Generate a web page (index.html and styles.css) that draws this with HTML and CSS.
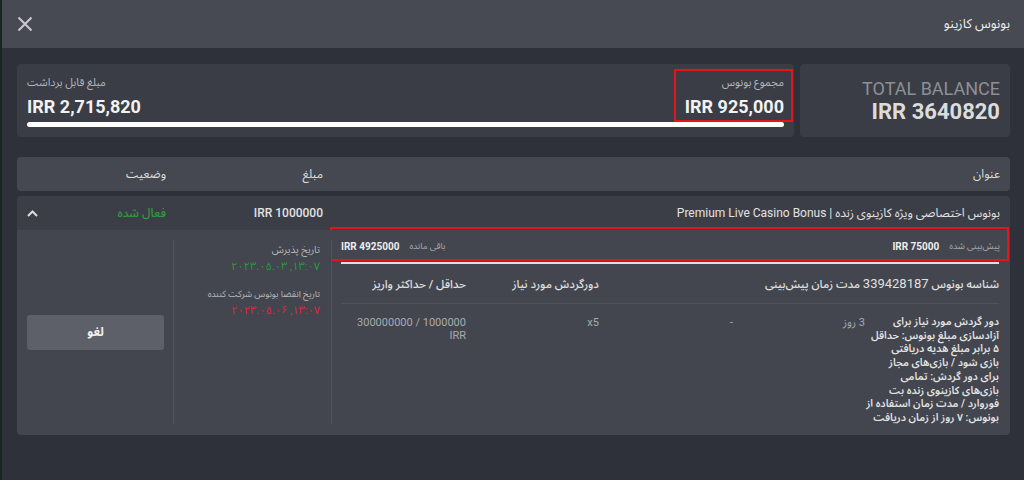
FILE: index.html
```html
<!DOCTYPE html>
<html>
<head>
  <meta charset="utf-8">
  <meta name="viewport" content="width=device-width">
  <title>بونوس کازینو</title>
  <link rel="stylesheet" href="styles.css">
</head>
<body>

    <div class="modal">
        <div class="modal_head">
            <svg class="close" width="16" height="16" viewBox="0 0 16 16">
                <path d="M1.5 1.5L14.5 14.5M14.5 1.5L1.5 14.5" stroke="#c9cacd" stroke-width="2" fill="none"/>
            </svg>
            <div class="modal_title" dir="rtl">بونوس کازینو</div>
        </div>

        <div class="modal_body">
            <div class="balances">
                <div class="card wallet">
                    <div class="amounts">
                        <div class="amount withdraw">
                            <div class="amount_label" dir="rtl">مبلغ قابل برداشت</div>
                            <div class="amount_value">IRR 2,715,820</div>
                        </div>
                        <div class="amount bonus marked">
                            <div class="amount_label" dir="rtl">مجموع بونوس</div>
                            <div class="amount_value">IRR 925,000</div>
                        </div>
                    </div>
                    <div class="progress"></div>
                </div>
                <div class="card total">
                    <div class="total_label">TOTAL BALANCE</div>
                    <div class="total_value">IRR 3640820</div>
                </div>
            </div>

            <div class="table_head" dir="rtl">
                <div class="th">عنوان</div>
                <div class="th">مبلغ</div>
                <div class="th">وضعیت</div>
            </div>

            <div class="bonus_row" dir="rtl">
                <!-- top line -->
                <div class="cell top title">بونوس اختصاصی ویژه کازینوی زنده | Premium Live Casino Bonus</div>
                <div class="cell top money">IRR 1000000</div>
                <div class="cell top state">
                    <span class="active">فعال شده</span>
                    <svg width="11" height="7" viewBox="0 0 11 7">
                        <polyline points="1,6 5.5,1.5 10,6" stroke="#dcdcdc" stroke-width="2" fill="none"/>
                    </svg>
                </div>

                <!-- details -->
                <div class="cell bottom details">
                    <div class="wager">
                        <div class="wager_part">
                            <span class="wager_label">پیش‌بینی شده</span>
                            <span class="wager_value" dir="ltr">IRR 75000</span>
                        </div>
                        <div class="wager_part">
                            <span class="wager_label">باقی مانده</span>
                            <span class="wager_value" dir="ltr">IRR 4925000</span>
                        </div>
                    </div>
                    <div class="wager_bar"></div>

                    <div class="info_grid info_head">
                        <div class="ih">شناسه بونوس <span class="bonus_id">339428187</span></div>
                        <div class="ih shift">مدت زمان پیش‌بینی</div>
                        <div class="ih"></div>
                        <div class="ih">دورگردش مورد نیاز</div>
                        <div class="ih">حداقل / حداکثر واریز</div>
                    </div>
                    <div class="info_grid info_body">
                        <div class="desc">دور گردش مورد نیاز برای<br>آزادسازی مبلغ بونوس: حداقل<br>۵ برابر مبلغ هدیه دریافتی<br>بازی شود / بازی‌های مجاز<br>برای دور گردش: تمامی<br>بازی‌های کازینوی زنده بت<br>فوروارد / مدت زمان استفاده از<br>بونوس: ۷ روز از زمان دریافت</div>
                        <div class="iv">3 روز</div>
                        <div class="iv">-</div>
                        <div class="iv"><span dir="ltr">x5</span></div>
                        <div class="iv"><span dir="ltr">300000000 / 1000000</span><br>IRR</div>
                    </div>
                </div>
                <div class="cell bottom dates">
                    <div class="dates_box">
                        <div class="date_label">تاریخ پذیرش</div>
                        <div class="date green" dir="ltr">۲۰۲۳.۰۵.۰۳ ,۱۳:۰۷</div>
                        <div class="date_label second">تاریخ انقضا بونوس شرکت کننده</div>
                        <div class="date red" dir="ltr">۲۰۲۳.۰۵.۰۶ ,۱۳:۰۷</div>
                    </div>
                </div>
                <div class="cell bottom actions">
                    <div class="cancel">لغو</div>
                </div>
            </div>
        </div>
    </div>

</body>
</html>
```

FILE: styles.css
```css
body{
    margin: 0;
    background-color: #15271f;
    font-family: Roboto, "Noto Sans Arabic", "DejaVu Sans Condensed", "DejaVu Sans", sans-serif;
}

.modal{
    margin-left: 2px;
    height: 480px;
    background-color: #2e3139;
}

.modal_head{
    height: 48px;
    background-color: #474a53;
    display: flex;
    align-items: center;
    justify-content: space-between;
    padding: 0 14px 0 15px;
}

.modal_title{
    font-size: 13px;
    color: #eeeeee;
}

.modal_body{
    padding: 16px 14px 0 15px;
}

/* balance cards */

.balances{
    display: flex;
    gap: 6px;
    height: 73px;
}

.card{
    background-color: #3a3d46;
    border-radius: 4px;
}

.wallet{
    flex: 1;
    padding: 11px 10px 0;
}

.amounts{
    display: flex;
    justify-content: space-between;
}

.amount_label{
    font-size: 11px;
    line-height: 16px;
    color: #b4b6ba;
}

.withdraw .amount_label{
    text-align: left;
}

.amount_value{
    margin-top: 5px;
    font-size: 18px;
    line-height: 22px;
    font-weight: 700;
    color: #f2f2f2;
}

.bonus{
    text-align: right;
}

.marked{
    position: relative;
}

.marked::after{
    content: "";
    position: absolute;
    top: -6px;
    bottom: -4px;
    left: -11px;
    right: -9px;
    border: 2px solid #e3141c;
}

.progress{
    margin-top: 4px;
    height: 5px;
    border-radius: 3px;
    background-color: #ffffff;
}

.total{
    width: 210px;
    box-sizing: border-box;
    padding: 15px 10px 0;
    text-align: right;
}

.total_label{
    font-size: 18px;
    line-height: 20px;
    color: #8e9095;
}

.total_value{
    font-size: 22px;
    line-height: 26px;
    font-weight: 700;
    color: #dcdcdc;
}

/* table */

.table_head{
    margin-top: 20px;
    height: 34px;
    display: grid;
    grid-template-columns: 1fr 159px 156px;
    background-color: #454851;
    border-radius: 4px;
}

.th{
    display: flex;
    align-items: center;
    font-size: 12px;
    color: #dedede;
}

.th:nth-child(1){
    padding-right: 10px;
}

.th:nth-child(2){
    padding-right: 9px;
}

.th:nth-child(3){
    padding-right: 7px;
}

.bonus_row{
    margin-top: 5px;
    display: grid;
    grid-template-columns: 1fr 159px 156px;
    grid-template-rows: 34px auto;
    border-radius: 4px;
    overflow: hidden;
}

.cell.top{
    background-color: #3b3e46;
    display: flex;
    align-items: center;
    font-size: 12px;
    color: #e2e2e2;
}

.cell.bottom{
    background-color: #43464e;
}

.top.title{
    padding-right: 10px;
    font-size: 12px;
}

.top.money{
    padding-right: 9px;
    font-weight: 500;
}

.top.state{
    justify-content: space-between;
    padding: 0 7px 0 10px;
}

.active{
    color: #2f9b3a;
    font-weight: 500;
}

/* details */

.details{
    padding: 0 11px 10px 9px;
}

.wager{
    margin: -3px -10px 0 -11px;
    height: 34px;
    box-sizing: border-box;
    border: 2px solid #e3141c;
    padding: 4px 7px 0 9px;
    display: flex;
    align-items: center;
    justify-content: space-between;
}

.wager_part{
    display: flex;
    gap: 10px;
    align-items: center;
}

.wager_label{
    font-size: 9px;
    color: #a9abaf;
}

.wager_value{
    font-size: 10px;
    font-weight: 700;
    color: #eeeeee;
}

.wager_bar{
    margin-top: 1px;
    height: 2px;
    background-color: #e4dcdc;
}

.info_grid{
    display: grid;
    grid-template-columns: 134px 132px 134px 133px 1fr;
}

.info_head{
    height: 39px;
    align-items: center;
    border-bottom: 1px solid #50535b;
}

.ih{
    font-size: 11.5px;
    font-weight: 500;
    color: #e0e0e0;
    white-space: nowrap;
}

.ih.shift{
    padding-right: 5px;
}

.bonus_id{
    font-size: 13px;
    font-weight: 400;
}

.info_body{
    padding-top: 11px;
}

.desc{
    font-size: 10.5px;
    line-height: 13.7px;
    font-weight: 600;
    color: #e2e2e2;
    white-space: nowrap;
}

.iv{
    font-size: 11px;
    line-height: 13px;
    padding-top: 1px;
    color: #a9abaf;
    text-align: right;
}

/* dates */

.dates{
    padding: 10px 0 11px;
}

.dates_box{
    height: 100%;
    box-sizing: border-box;
    border-left: 1px solid #50535b;
    border-right: 1px solid #50535b;
    padding: 2px 11px 0 0;
}

.date_label{
    font-size: 10px;
    line-height: 16px;
    color: #b8babe;
}

.date_label.second{
    margin-top: 10px;
    font-size: 9px;
}

.date{
    font-size: 11px;
    line-height: 18px;
    text-align: right;
}

.green{
    color: #2a9a3a;
}

.red{
    color: #e0253f;
}

/* cancel */

.actions{
    display: flex;
    align-items: center;
    padding: 0 9px 0 10px;
}

.cancel{
    flex: 1;
    height: 35px;
    display: flex;
    align-items: center;
    justify-content: center;
    background-color: #5d6068;
    border-radius: 3px;
    font-size: 12px;
    font-weight: 700;
    color: #f0f0f0;
}
```
